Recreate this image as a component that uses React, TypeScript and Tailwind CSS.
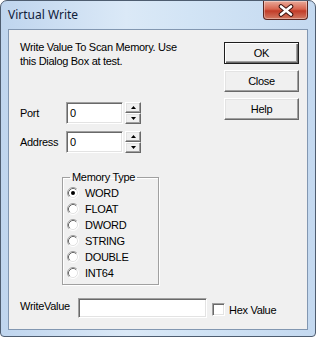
import React from "react";

const raised =
  "bg-[#f0f0f0] border border-t-white border-l-white border-r-[#696969] border-b-[#696969] shadow-[inset_-1px_-1px_0_#a0a0a0,inset_1px_1px_0_#e3e3e3]";
const sunken =
  "bg-white border border-t-[#a0a0a0] border-l-[#a0a0a0] border-r-white border-b-white shadow-[inset_1px_1px_0_#696969,inset_-1px_-1px_0_#e3e3e3]";

function Spinner() {
  return (
    <div className="flex flex-col ml-[2px]">
      <div className={`${raised} w-[16px] h-[11px] flex items-center justify-center`}>
        <svg width="5" height="3" viewBox="0 0 5 3">
          <polygon points="2.5,0 5,3 0,3" fill="#000" />
        </svg>
      </div>
      <div className={`${raised} w-[16px] h-[11px] flex items-center justify-center`}>
        <svg width="5" height="3" viewBox="0 0 5 3">
          <polygon points="0,0 5,0 2.5,3" fill="#000" />
        </svg>
      </div>
    </div>
  );
}

function NumberField({ label }: { label: string }) {
  return (
    <div className="flex items-center h-[22px]">
      <span className="w-[46px]">{label}</span>
      <div className={`${sunken} w-[57px] h-[22px] flex items-center pl-[3px]`}>0</div>
      <Spinner />
    </div>
  );
}

function Radio({ label, checked }: { label: string; checked?: boolean }) {
  return (
    <div className="flex items-center h-[16px]">
      <svg width="12" height="12" viewBox="0 0 12 12" className="shrink-0">
        <circle cx="6" cy="6" r="5" fill="#fff" />
        <path d="M2.11 9.89 A5.5 5.5 0 0 1 9.89 2.11" fill="none" stroke="#a0a0a0" strokeWidth="1" />
        <path d="M9.89 2.11 A5.5 5.5 0 0 1 2.11 9.89" fill="none" stroke="#ffffff" strokeWidth="1" />
        <path d="M2.82 9.18 A4.5 4.5 0 0 1 9.18 2.82" fill="none" stroke="#696969" strokeWidth="1" />
        <path d="M9.18 2.82 A4.5 4.5 0 0 1 2.82 9.18" fill="none" stroke="#e3e3e3" strokeWidth="1" />
        {checked && <circle cx="6" cy="6" r="2" fill="#000" />}
      </svg>
      <span className="ml-[6px]">{label}</span>
    </div>
  );
}

function DlgButton({ label, isDefault }: { label: string; isDefault?: boolean }) {
  const cls = isDefault
    ? "bg-[#f0f0f0] border border-[#1e1e1e] shadow-[inset_1px_1px_0_#fff,inset_-1px_-1px_0_#696969,inset_-2px_-2px_0_#a0a0a0]"
    : raised;
  return (
    <button className={`${cls} w-[75px] h-[22px] flex items-center justify-center`}>
      {label}
    </button>
  );
}

export default function App() {
  const types = ["WORD", "FLOAT", "DWORD", "STRING", "DOUBLE", "INT64"];

  return (
    <div className="w-[316px] h-[337px] flex flex-col rounded-t-[7px] rounded-b-[4px] border border-[#4e5d70] bg-[linear-gradient(90deg,#bfd5ee,#dbe9f7_40%,#d2e4f5_60%,#c4d9f0)] overflow-hidden">
      {/* TITLE BAR */}
      <div className="h-[28px] flex items-start justify-between pl-[7px] pr-[7px]">
        <span className="mt-[5px] text-[12px] text-[#10203a] font-['Noto_Sans',sans-serif]">
          Virtual Write
        </span>
        <button className="w-[45px] h-[19px] rounded-b-[4px] border border-t-0 border-[#5a2620] bg-[linear-gradient(180deg,#e9aa9a,#d8654f_45%,#c23c28_55%,#d27a63)] shadow-[inset_0_0_0_1px_rgba(255,255,255,0.35)] flex items-center justify-center">
          <svg width="16" height="13" viewBox="0 0 16 13">
            <path d="M3 2.5 L13 10.5 M13 2.5 L3 10.5" stroke="#3c1410" strokeWidth="4.6" strokeLinecap="round" />
            <path d="M3 2.5 L13 10.5 M13 2.5 L3 10.5" stroke="#ffffff" strokeWidth="2.6" strokeLinecap="round" />
          </svg>
        </button>
      </div>

      {/* CLIENT */}
      <div className="mx-[7px] mb-[6px] flex-1 border border-[#8297b1] bg-[#f0f0f0] text-[11px] tracking-[-0.3px] text-black font-['Liberation_Sans',Arial,sans-serif] flex flex-col pl-[11px] pr-[8px] pt-[10px]">
        <div className="flex">
          <div className="flex-1 flex flex-col">
            <p className="leading-[14px]">
              Write Value To Scan Memory. Use
              <br />
              this Dialog Box at test.
            </p>
            <div className="mt-[34px] flex flex-col gap-[7px]">
              <NumberField label="Port" />
              <NumberField label="Address" />
            </div>
          </div>
          <div className="mt-[2px] flex flex-col gap-[6px]">
            <DlgButton label="OK" isDefault />
            <DlgButton label="Close" />
            <DlgButton label="Help" />
          </div>
        </div>

        {/* MEMORY TYPE */}
        <fieldset className="mt-[18px] ml-[42px] w-[97px] border border-[#a0a0a0] shadow-[inset_1px_1px_0_#fff,1px_1px_0_#fff] pl-[4px] pt-[1px] pb-[3px]">
          <legend className="ml-[3px] px-[2px] leading-[13px]">Memory Type</legend>
          {types.map((t, i) => (
            <Radio key={t} label={t} checked={i === 0} />
          ))}
        </fieldset>

        {/* WRITE VALUE */}
        <div className="mt-[13px] flex items-start">
          <span className="w-[58px] mt-[2px] leading-[13px]">WriteValue</span>
          <div className={`${sunken} w-[129px] h-[20px]`} />
          <div className={`${sunken} w-[13px] h-[13px] ml-[5px] mt-[5px]`} />
          <span className="ml-[4px] mt-[6px] leading-[13px]">Hex Value</span>
        </div>
      </div>
    </div>
  );
}
